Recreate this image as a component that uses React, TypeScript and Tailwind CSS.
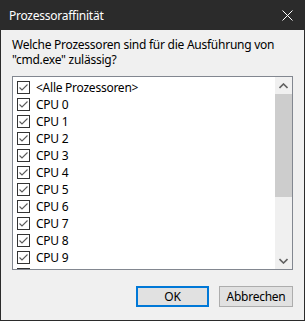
const font = { fontFamily: '"Noto Sans", "Open Sans", sans-serif' };

function CheckBox() {
  return (
    <div className="w-[13px] h-[13px] border border-[#333333] bg-white shrink-0 flex items-center justify-center">
      <svg width="11" height="11" viewBox="0 0 11 11">
        <polyline points="1.5,5.5 4,8 9.5,2.5" fill="none" stroke="#5a5a5a" strokeWidth="1.1" />
      </svg>
    </div>
  );
}

const items = ["<Alle Prozessoren>", ...Array.from({ length: 11 }, (_, i) => `CPU ${i}`)];

export default function App() {
  return (
    <div
      className="w-[305px] h-[321px] bg-[#2b2b2b] flex flex-col px-px pb-px text-[12px] leading-[15px] tracking-[-0.25px]"
      style={font}
    >
      {/* title bar */}
      <div className="h-[30px] shrink-0 flex items-center justify-between pl-[8px] pr-[11px] text-white">
        <span>Prozessoraffinität</span>
        <svg width="11" height="11" viewBox="0 0 11 11">
          <path d="M0.5 0.5 L10.5 10.5 M10.5 0.5 L0.5 10.5" stroke="#ffffff" strokeWidth="1" />
        </svg>
      </div>

      <div className="flex-1 bg-[#f0f0f0] flex flex-col px-[11px] pt-[7px] text-black">
        <p>
          Welche Prozessoren sind für die Ausführung von
          <br />
          "cmd.exe" zulässig?
        </p>

        {/* list box */}
        <div className="mt-[9px] h-[194px] border border-[#828790] bg-white flex overflow-hidden">
          <div className="flex-1 flex flex-col pl-[4px] pt-[4px] overflow-hidden">
            {items.map((label) => (
              <div key={label} className="h-[17px] shrink-0 flex items-start gap-[6px]">
                <CheckBox />
                <span className="leading-[15px] -mt-[1px]">{label}</span>
              </div>
            ))}
          </div>
          <div className="w-[17px] shrink-0 bg-[#f0f0f0] flex flex-col">
            <div className="h-[17px] flex items-center justify-center">
              <svg width="9" height="6" viewBox="0 0 9 6">
                <polyline points="0.5,5 4.5,1 8.5,5" fill="none" stroke="#606060" strokeWidth="1.6" />
              </svg>
            </div>
            <div className="h-[103px] bg-[#cdcdcd]" />
            <div className="flex-1" />
            <div className="h-[17px] flex items-center justify-center">
              <svg width="9" height="6" viewBox="0 0 9 6">
                <polyline points="0.5,1 4.5,5 8.5,1" fill="none" stroke="#606060" strokeWidth="1.6" />
              </svg>
            </div>
          </div>
        </div>

        {/* buttons */}
        <div className="mt-[16px] flex justify-end gap-[10px]">
          <button className="w-[73px] h-[21px] border-2 border-[#0078d7] bg-[#e1e1e1] flex items-center justify-center">
            OK
          </button>
          <button className="w-[74px] h-[21px] border border-[#adadad] bg-[#e1e1e1] flex items-center justify-center">
            Abbrechen
          </button>
        </div>
      </div>
    </div>
  );
}
